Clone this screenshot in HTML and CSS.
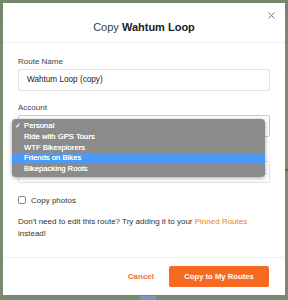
FILE: index.html
```html
<!DOCTYPE html>
<html lang="en">
<head>
    <meta charset="UTF-8">
    <meta name="viewport" content="width=device-width, initial-scale=1.0">
    <title>Copy Wahtum Loop</title>
    <link rel="stylesheet" href="styles.css">
</head>
<body>
    <div class="map">
        <span class="map-route"></span>
        <span class="map-water"></span>
    </div>

    <div class="modal">
        <div class="modal-header">
            <h1>Copy <strong>Wahtum Loop</strong></h1>
            <button class="close" aria-label="Close">
                <svg width="7" height="7" viewBox="0 0 7 7">
                    <path d="M0.5 0.5 L6.5 6.5 M6.5 0.5 L0.5 6.5" stroke="#7a7a7a" stroke-width="1" fill="none"/>
                </svg>
            </button>
        </div>

        <div class="modal-body">
            <div class="field">
                <label>Route Name</label>
                <div class="input">Wahtum Loop (copy)</div>
            </div>

            <div class="field">
                <label>Account</label>
                <!-- current value sits under the open menu -->
                <div class="select focused">
                    <span></span>
                    <svg class="arrows" width="5" height="8" viewBox="0 0 5 8">
                        <path d="M0.8 5 L2.5 6.8 L4.2 5" stroke="#333" stroke-width="0.9" fill="none"/>
                    </svg>
                </div>

                <!-- native select menu, opened -->
                <ul class="menu">
                    <li class="checked">Personal</li>
                    <li>Ride with GPS Tours</li>
                    <li>WTF Bikexplorers</li>
                    <li class="hover">Friends on Bikes</li>
                    <li>Bikepacking Roots</li>
                </ul>
            </div>

            <!-- second field, hidden behind the menu -->
            <div class="field">
                <label class="covered"></label>
                <div class="select">
                    <span></span>
                    <svg class="arrows" width="5" height="8" viewBox="0 0 5 8">
                        <path d="M0.8 5 L2.5 6.8 L4.2 5" stroke="#333" stroke-width="0.9" fill="none"/>
                    </svg>
                </div>
            </div>

            <div class="checkbox-row">
                <span class="checkbox"></span>
                <span>Copy photos</span>
            </div>

            <p class="hint">Don't need to edit this route? Try adding it to your <a href="#">Pinned Routes</a> instead!</p>
        </div>

        <div class="modal-footer">
            <button class="btn-link">Cancel</button>
            <button class="btn-primary">Copy to My Routes</button>
        </div>
    </div>
</body>
</html>
```

FILE: styles.css
```css
html, body {
    margin: 0;
    width: 288px;
    height: 300px;
    overflow: hidden;
}

body {
    font-family: "Liberation Sans", Arial, sans-serif;
    background: #7b8b75;
    color: #333;
    position: relative;
}

.map {
    position: absolute;
    inset: 0;
    background: linear-gradient(180deg, #76876f 0%, #7e8d78 50%, #778a72 100%);
}

.map-route {
    position: absolute;
    left: 285px;
    top: 169px;
    width: 3px;
    height: 2px;
    background: #c9302c;
}

.map-water {
    position: absolute;
    left: 140px;
    top: 296px;
    width: 16px;
    height: 4px;
    background: #7d95b0;
}

.modal {
    position: relative;
    margin: 3px 0 0 3px;
    width: 282px;
    height: 292px;
    background: #fff;
    display: flex;
    flex-direction: column;
}

.modal-header {
    padding: 16px 30px 7px;
    border-bottom: 1px solid #efefef;
    text-align: center;
}

.modal-header h1 {
    margin: 0;
    font-size: 11px;
    line-height: 16px;
    font-weight: normal;
    color: #3a3a3a;
}

.modal-header strong {
    color: #222;
}

.close {
    position: absolute;
    top: 9px;
    right: 10px;
    width: 7px;
    height: 7px;
    padding: 0;
    border: none;
    background: none;
    display: flex;
}

.modal-body {
    flex: 1;
    padding: 14px 15px 0;
}

.field {
    position: relative;
    margin-bottom: 12px;
}

.field label {
    display: block;
    font-size: 8px;
    line-height: 10px;
    height: 10px;
    color: #444;
    margin-bottom: 2px;
}

.input,
.select {
    box-sizing: border-box;
    height: 22px;
    border: 1px solid #e1e1e1;
    border-radius: 2px;
    padding: 0 8px;
    font-size: 8.2px;
    line-height: 20px;
    color: #222;
}

.select {
    display: flex;
    align-items: center;
    justify-content: space-between;
    padding-right: 3px;
}

.select.focused {
    border-color: #b3c9f3;
}

.menu {
    position: absolute;
    left: -6px;
    top: 16px;
    width: 253px;
    margin: 0;
    padding: 2px 0;
    list-style: none;
    background: #8b8b8b;
    border-radius: 4px;
    box-shadow: 0 1px 4px rgba(0, 0, 0, 0.35);
    z-index: 2;
}

.menu li {
    height: 10.8px;
    line-height: 10.8px;
    padding-left: 12px;
    font-size: 7.7px;
    color: #fff;
    position: relative;
    text-shadow: 0 0 0.3px #fff;
}

.menu li.checked::before {
    content: "\2713";
    position: absolute;
    left: 3px;
    font-size: 7px;
}

.menu li.hover {
    background: #4c9af5;
}

.checkbox-row {
    display: flex;
    align-items: center;
    gap: 5px;
    margin-top: 11px;
    height: 10px;
    font-size: 8px;
    color: #333;
}

.checkbox {
    box-sizing: border-box;
    width: 8px;
    height: 8px;
    border: 1px solid #8a8a8a;
    border-radius: 2px;
}

.hint {
    margin: 11px 0 0;
    font-size: 8px;
    line-height: 11.5px;
    color: #333;
}

.hint a {
    color: #f7792f;
    text-decoration: none;
}

.modal-footer {
    border-top: 1px solid #efefef;
    padding: 8px 16px 8px;
    display: flex;
    justify-content: flex-end;
    align-items: center;
    gap: 7px;
}

.btn-link {
    border: none;
    background: none;
    padding: 0 8px;
    font-family: inherit;
    font-size: 8px;
    font-weight: bold;
    color: #f56f2a;
}

.btn-primary {
    width: 100px;
    height: 21px;
    border: none;
    border-radius: 2px;
    background: #f76a22;
    color: #fff;
    font-family: inherit;
    font-size: 7.7px;
    font-weight: bold;
}
```
